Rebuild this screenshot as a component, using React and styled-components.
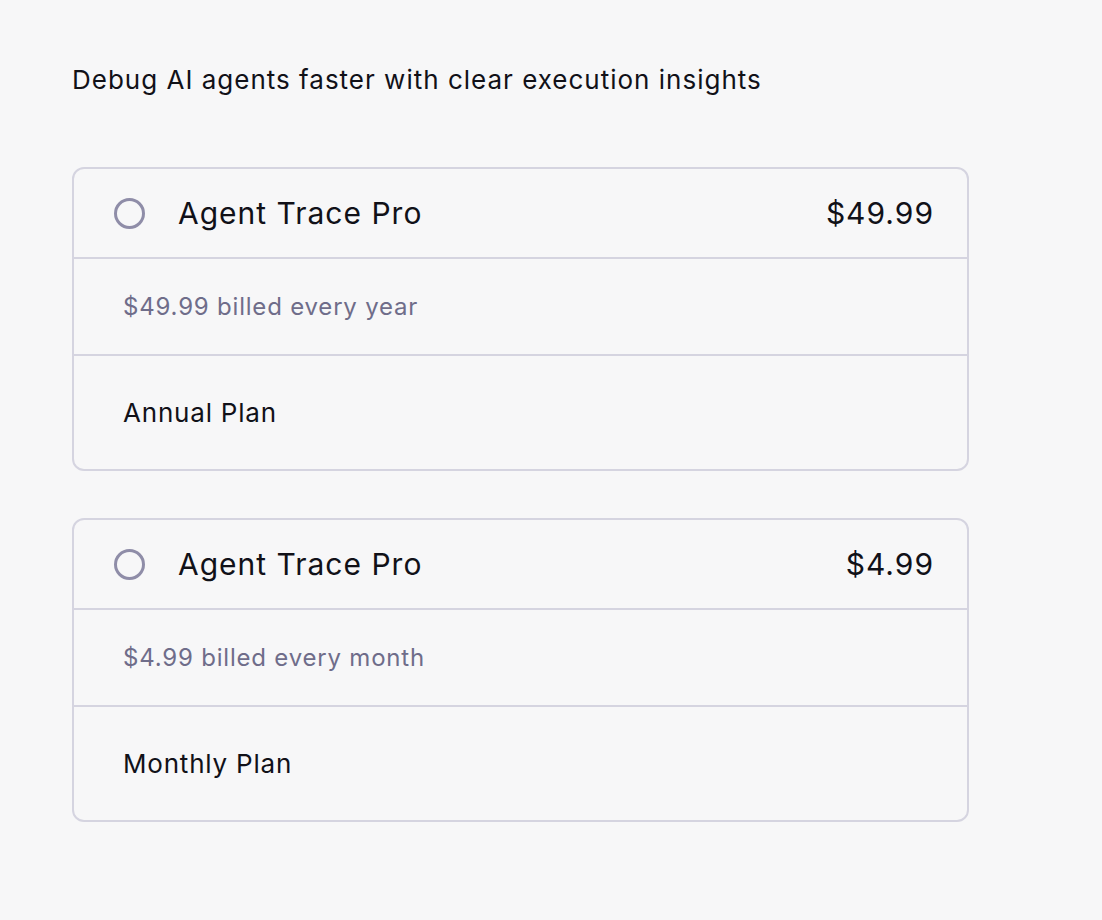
import React, { useState } from "react";
import styled, { createGlobalStyle } from "styled-components";

const GlobalStyle = createGlobalStyle`
  body {
    margin: 0;
    background: #f7f7f8;
    font-family: Inter, "Noto Sans", sans-serif;
    color: #111118;
  }
`;

const Page = styled.main`
  padding: 63px 72px 80px;
  width: 897px;
`;

const Heading = styled.p`
  margin: 0 0 70px;
  font-size: 26px;
  line-height: 34px;
  letter-spacing: 1px;
  color: #111118;
`;

const PlanList = styled.div`
  display: flex;
  flex-direction: column;
  gap: 47px;
`;

const Card = styled.label`
  display: flex;
  flex-direction: column;
  border: 2px solid #d5d4e0;
  border-radius: 12px;
  cursor: pointer;
  background: ${(p) => (p.$active ? "#f1f0fa" : "#f7f7f8")};
`;

const HeaderRow = styled.div`
  display: flex;
  align-items: center;
  height: 88px;
  padding: 0 33px 0 40px;
  border-bottom: 2px solid #d5d4e0;
`;

const Radio = styled.span`
  width: 31px;
  height: 31px;
  border-radius: 50%;
  border: 3px solid #8f8da8;
  flex-shrink: 0;
  margin-right: 33px;
  box-sizing: border-box;
`;

const Title = styled.span`
  flex: 1;
  font-size: 30px;
  letter-spacing: 1px;
`;

const Price = styled.span`
  font-size: 30px;
  letter-spacing: 1px;
`;

const Row = styled.div`
  display: flex;
  align-items: center;
  padding: 0 49px;
  height: ${(p) => p.$h}px;
  font-size: ${(p) => p.$size}px;
  letter-spacing: 0.8px;
  color: ${(p) => p.$color};
  border-bottom: ${(p) => (p.$last ? "none" : "2px solid #d5d4e0")};
`;

const plans = [
  { id: "annual", price: "$49.99", note: "$49.99 billed every year", name: "Annual Plan" },
  { id: "monthly", price: "$4.99", note: "$4.99 billed every month", name: "Monthly Plan" },
];

export default function App() {
  const [selected, setSelected] = useState(null);

  return (
    <Page>
      <GlobalStyle />
      <Heading>Debug AI agents faster with clear execution insights</Heading>
      <PlanList>
        {plans.map((plan) => (
          <Card key={plan.id} $active={selected === plan.id} onClick={() => setSelected(plan.id)}>
            <HeaderRow>
              <Radio />
              <Title>Agent Trace Pro</Title>
              <Price>{plan.price}</Price>
            </HeaderRow>
            <Row $h={95} $size={24} $color="#6f6d8a">{plan.note}</Row>
            <Row $h={113} $size={26} $color="#111118" $last>{plan.name}</Row>
          </Card>
        ))}
      </PlanList>
    </Page>
  );
}
